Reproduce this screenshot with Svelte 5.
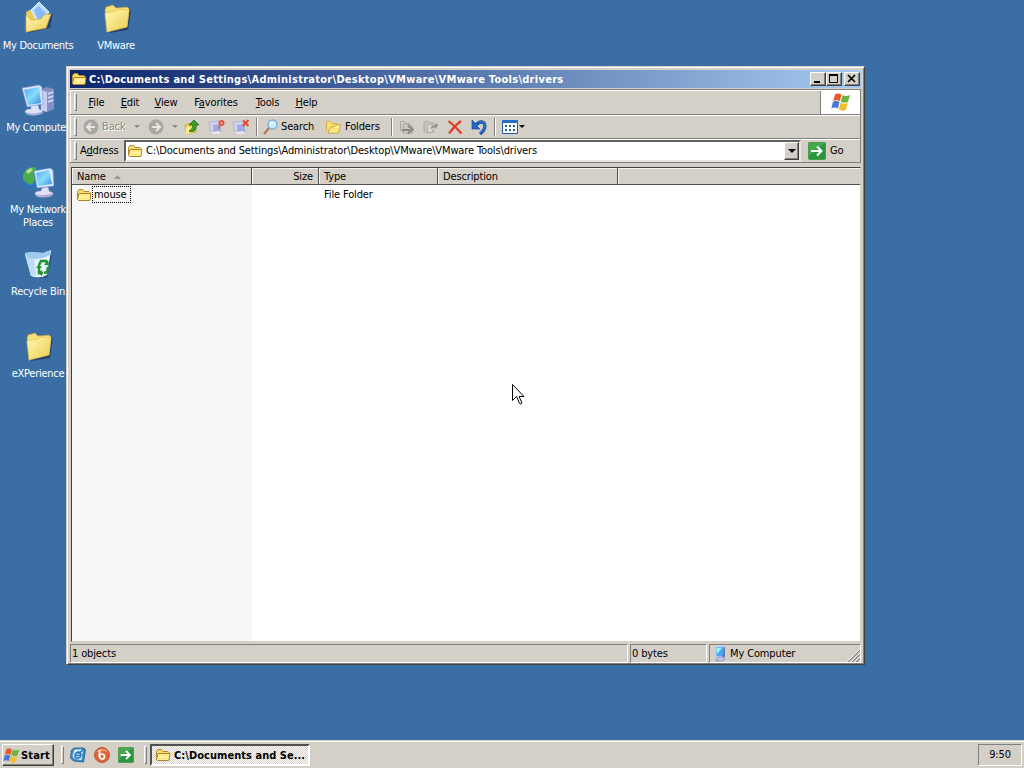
<script>
  const path = 'C:\\Documents and Settings\\Administrator\\Desktop\\VMware\\VMware Tools\\drivers'

  const columns = [
    [
      { icon: 'documents', label: 'My Documents' },
      { icon: 'computer', label: 'My Computer' },
      { icon: 'network', label: 'My Network Places' },
      { icon: 'recycle', label: 'Recycle Bin' },
      { icon: 'folder', label: 'eXPerience' }
    ],
    [{ icon: 'folder', label: 'VMware' }]
  ]

  const menus = [
    { pre: '', key: 'F', post: 'ile', width: 33 },
    { pre: '', key: 'E', post: 'dit', width: 34 },
    { pre: '', key: 'V', post: 'iew', width: 38 },
    { pre: 'F', key: 'a', post: 'vorites', width: 62 },
    { pre: '', key: 'T', post: 'ools', width: 41 },
    { pre: '', key: 'H', post: 'elp', width: 37 }
  ]
</script>

{#snippet smallFolder()}
  <svg width="16" height="16" viewBox="0 0 16 16">
    <path d="M1.500 12.500V4.500l1.500-2h3.500l1.500 2h5l1 1v7z" fill="#f5dc72" stroke="#b48a26"/>
    <path d="M2.500 13.500l-1-1 1.500-6h12l-1.200 7z" fill="#fff2a0" stroke="#b08522"/>
    <path d="M4 8h10M3.500 11.500h10" stroke="#ffe473"/>
  </svg>
{/snippet}

{#snippet flag(size)}
  <svg width={size} height={size} viewBox="0 0 20 20">
    <path d="M4 2.500q3-1.800 6.500 0L8.900 9Q5.500 7.300 2.300 9z" fill="#e9582b"/>
    <path d="M11.500 3q3 2 7.500 0L17 10q-4 1.600-7.300-.5z" fill="#6eb33d"/>
    <path d="M2 10q3-2 6.500 0L6.900 16.500Q3.500 14.700.300 16.500z" fill="#4679d5"/>
    <path d="M9.500 10.500q3.400 2 7.200.6L14.900 18q-4 1.600-7.200-.8z" fill="#f3bd32"/>
  </svg>
{/snippet}

{#snippet goArrow(size)}
  <svg width={size} height={size} viewBox="0 0 18 18">
    <rect x=".5" y=".5" width="17" height="17" rx="1" fill="#2a973c" stroke="#4c9b50"/>
    <path d="M1 1h16L1 14z" fill="#5bb65c" opacity=".55"/>
    <path d="M3 9h10M9 4.500L13.500 9 9 13.500" fill="none" stroke="#fff" stroke-width="2"/>
  </svg>
{/snippet}

{#snippet bigIcon(name)}
  <svg width="32" height="32" viewBox="0 0 32 32">
    <defs>
      <linearGradient id="yellow-{name}" x2="1" y2="1">
        <stop stop-color="#fffab4"/><stop offset="1" stop-color="#edca50"/>
      </linearGradient>
      <linearGradient id="screen-{name}" x2="1" y2="1">
        <stop stop-color="#55a5f2"/><stop offset=".5" stop-color="#86dcff"/><stop offset="1" stop-color="#3989dc"/>
      </linearGradient>
    </defs>
    {#if name === 'folder'}
      <path d="M8 10l23-2-3 20-19 3z" fill="#1d3554" opacity=".75"/>
      <path d="M5 8l1-3 7-2 3 3 11-1 2 2-2 17H7z" fill="#f5df79" stroke="#bd9b3d" stroke-width=".7"/>
      <path d="M5 11l11-2 3-2 10 1-2 17-20 5z" fill="url(#yellow-folder)" stroke="#e5c650" stroke-width=".7"/>
    {:else if name === 'documents'}
      <path d="M6 31L28 26l3-14-3 1z" fill="#1d3554" opacity=".7"/>
      <path d="M4 10l6-3 3 3 12-2-1 17-18 3z" fill="#eacb58"/>
      <path d="M9 8L17 0l10 10-10 13z" fill="#b9dcff" stroke="#e5f3ff"/>
      <path d="M12 8l5-4 7 8-7 8z" fill="#88bafa"/>
      <path d="M4 29V13l5 5 10-1 3-4 7-1-5 14-20 4z" fill="url(#yellow-documents)" stroke="#d5ad3a" stroke-width=".7"/>
    {:else if name === 'recycle'}
      <path d="M8 29l17 1 5-22-3-1z" fill="#1d3554" opacity=".5"/>
      <path d="M3 5l7-1 11 1 8-3-4 25q-7 4-16 1z" fill="#c4e4f7"/>
      <path d="M3 6q13 6 26-3l-5 24q-7 4-15 1z" fill="#e2f3fd"/>
      <path d="M3 5l8-1 10 1 8-3-1 5q-12 6-24 3z" fill="#9dcbef"/>
      <path d="M3 7l9 3 2 18-5 0z" fill="#b0d4f2" opacity=".7"/>
      <path d="M17 17l2-4h5l2 4M17 20v5h4M26 19l-1 5-3 1" fill="none" stroke="#26912f" stroke-width="2.500"/>
      <path d="M22 17h5l-1-5zM20 22v6l-4-3zM14 20l3-4 3 4z" fill="#26912f"/>
    {:else if name === 'computer'}
      <path d="M18 6l7-3 7 2v20l-7 3-6-2z" fill="#8590c6"/>
      <path d="M18 6l7 2v20l-6-2z" fill="#c7cdf0"/>
      <path d="M26 10l5-2M26 14l5-2M26 18l5-2" stroke="#d9def8" stroke-width="1.500"/>
      <path d="M0 4l17-3 3 2 1 17-16 3z" fill="#d8e4fb" stroke="#7293c9" stroke-width=".6"/>
      <path d="M2 6l15-3 2 16-13 2z" fill="url(#screen-computer)"/>
      <path d="M9 22l7-1 1 4 4 2q1 3-7 4-9 1-11-3 0-3 6-3z" fill="#dee3f7" stroke="#a0addd" stroke-width=".6"/>
      <path d="M4 28q8 4 17-1-1 4-8 4-7 1-9-3" fill="#9fa8d2"/>
    {:else}
      <circle cx="11" cy="11" r="10.500" fill="#2b70c8"/>
      <path d="M1 9Q4 0 13 1l3 5-5 2 2 5-3 6Q4 18 1 13z" fill="#4cac4b"/>
      <path d="M4 5l5-3 2 2-5 4z" fill="#b5e397"/>
      <path d="M12 5l16-3 3 2 1 16-17 2z" fill="#dbe9fb" stroke="#688fc8" stroke-width=".6"/>
      <path d="M14 7l13-3 3 14-14 2z" fill="url(#screen-network)"/>
      <path d="M20 22l6-1 1 4 4 2q1 3-7 4-9 1-11-3 0-3 6-3z" fill="#e5dff5" stroke="#a9a5d6" stroke-width=".6"/>
      <path d="M14 28q8 3 17-1-2 4-9 4-6 0-8-3" fill="#a5a8d2"/>
    {/if}
  </svg>
{/snippet}

{#snippet monitor(mark)}
  <svg width="18" height="16" viewBox="0 0 18 16">
    <path d="M1 3l10-1v9L2 12z" fill="#cfd1e8" stroke="#b3b7d9"/>
    <path d="M5 6l8-1v8l-7 1z" fill="#a3abdf"/>
    <path d="M3 13l8-1 2 3H5z" fill="#e6e6f5"/>
    {#if mark === 'map'}
      <circle cx="13.500" cy="4" r="2" fill="#f3c2b5" stroke="#e0563f" stroke-width="2"/>
      <path d="M12 6l-2 4" stroke="#db6851" stroke-width="1.500"/>
    {:else}
      <path d="M11 1.500l5.500 5.500M16.500 1l-5.500 6" stroke="#ea462e" stroke-width="2"/>
    {/if}
  </svg>
{/snippet}

<div class="screen">
  <div class="desktop">
    {#each columns as items}
      <div class="column">
        {#each items as item}
          <div class="shortcut">
            {@render bigIcon(item.icon)}
            <span>{item.label}</span>
          </div>
        {/each}
      </div>
    {/each}
  </div>

  <main class="window">
    <header class="title">
      {@render smallFolder()}
      <span class="title-text">{path}</span>
      <div class="controls">
        <button aria-label="Minimize"><svg width="12" height="10"><path d="M2 8h6" stroke="#000" stroke-width="2"/></svg></button>
        <button aria-label="Maximize"><svg width="12" height="10"><path d="M1.500 1.500h8v7h-8z" fill="none" stroke="#000"/><path d="M1 1h9" stroke="#000" stroke-width="2"/></svg></button>
        <button class="close" aria-label="Close"><svg width="12" height="10"><path d="M2 1l7 7M9 1L2 8" stroke="#000" stroke-width="1.700"/></svg></button>
      </div>
    </header>

    <nav class="menu">
      <i class="grip"></i>
      {#each menus as m}
        <span class="menu-item" style="width: {m.width}px">{m.pre}<u>{m.key}</u>{m.post}</span>
      {/each}
      <div class="throbber">{@render flag(20)}</div>
    </nav>

    <div class="toolbar">
      <i class="grip"></i>
      <div class="tool back">
        <svg width="16" height="16" viewBox="0 0 16 16"><circle cx="8" cy="8" r="7.500" fill="#a8a7a3"/><path d="M12 8H4m4-4L4 8l4 4" fill="none" stroke="#e8e7e2" stroke-width="2"/></svg>
        <span>Back</span>
        <b class="caret"></b>
      </div>
      <div class="tool forward">
        <svg width="16" height="16" viewBox="0 0 16 16"><circle cx="8" cy="8" r="7.500" fill="#a8a7a3"/><path d="M4 8h8M8 4l4 4-4 4" fill="none" stroke="#e8e7e2" stroke-width="2"/></svg>
        <b class="caret"></b>
      </div>
      <div class="tool up">
        <svg width="16" height="16" viewBox="0 0 16 16">
          <path d="M1 6l4-2 2 2 5-1v8l-9 2z" fill="#edcd54" stroke="#c39b2c" stroke-width=".7"/>
          <path d="M2 8l8-1-1 7-7 1z" fill="#ffed82"/>
          <path d="M7 13q6-1 5-7h3L10 1 5 6h4q0 4-4 6z" fill="#36a429" stroke="#1b6a17" stroke-width=".8"/>
        </svg>
      </div>
      <div class="tool map">{@render monitor('map')}</div>
      <div class="tool unmap">{@render monitor('cross')}</div>
      <i class="divider"></i>
      <div class="tool search">
        <svg width="17" height="16" viewBox="0 0 17 16"><path d="M7 9l-5 6" stroke="#bd7158" stroke-width="2.200"/><circle cx="10.500" cy="5.500" r="4.500" fill="#c6efff" stroke="#7faed9" stroke-width="1.400"/><path d="M8 5q1-2 3-2" fill="none" stroke="#fff"/></svg>
        <span>Search</span>
      </div>
      <div class="tool folders">
        <svg width="17" height="16" viewBox="0 0 17 16"><path d="M1.500 12V2.500h4L7 4.500h5v3" fill="#f6df75" stroke="#d5b145"/><path d="M3 14L5.500 8H9l1-2h5.500l-2 8z" fill="#fff193" stroke="#cfa83c"/><path d="M6 9.500h8M5.500 11.500H13" stroke="#f8dd65"/></svg>
        <span>Folders</span>
      </div>
      <i class="divider"></i>
      <div class="tool move">
        <svg width="17" height="16" viewBox="0 0 17 16"><path d="M1.500 12V2.500h4l1 2H11v8z" fill="#d2d1cc" stroke="#aaa9a4"/><path d="M4 14V5h7l3 3v6z" fill="#c9c8c4" stroke="#aaa9a4"/><path d="M3 11h8M9 6.500l4.500 4-4.500 4" fill="none" stroke="#868580" stroke-width="2"/></svg>
      </div>
      <div class="tool copy">
        <svg width="17" height="16" viewBox="0 0 17 16"><path d="M1 3l4-1 2 2 4 0 0 9-7 1-3-2z" fill="#c5c4c0" stroke="#aaa9a4"/><path d="M4 6l6-1v8l-5 1z" fill="#dad9d4" stroke="#a3a29d" stroke-width=".7"/><path d="M7 9q1-4 5-4V3l4 3-4 6v-3q-3 0-5 2z" fill="#9c9b96" stroke="#eceae4" stroke-width=".6"/></svg>
      </div>
      <div class="tool delete">
        <svg width="16" height="16" viewBox="0 0 16 16"><path d="M1.500 2Q8 7 14.500 14.500M14 2Q7 7 2 14.500" fill="none" stroke="#e43c1e" stroke-width="2.200"/></svg>
      </div>
      <div class="tool undo">
        <svg width="16" height="16" viewBox="0 0 16 16"><path d="M4 7Q9 1 13 4q3 5-4 11" fill="none" stroke="#194f9f" stroke-width="3.200"/><path d="M4 7Q9 1 13 4q3 5-4 10" fill="none" stroke="#3073cc" stroke-width="1.600"/><path d="M1 1v9h8L6 7l3-3-4 1z" fill="#246bc4" stroke="#174c9b" stroke-width=".7"/></svg>
      </div>
      <i class="divider"></i>
      <div class="tool views">
        <svg width="16" height="14" viewBox="0 0 16 14"><path d="M.5.500h15v13H.5z" fill="#f5fbff" stroke="#205bb5"/><path d="M0 1.500h16" stroke="#286ccc" stroke-width="3"/><path d="M3 6h2M7 6h2M11 6h2M3 10h2M7 10h2M11 10h2" stroke="#315f91" stroke-width="2"/></svg>
        <b class="caret dark"></b>
      </div>
    </div>

    <div class="address">
      <i class="grip"></i>
      <span class="address-label">A<u>d</u>dress</span>
      <div class="combo">
        {@render smallFolder()}
        <span class="address-text">{path}</span>
        <button class="drop" aria-label="Open list"><b class="caret dark wide"></b></button>
      </div>
      <div class="go">{@render goArrow(18)}<span>Go</span></div>
    </div>

    <section class="list">
      <div class="list-head">
        <span class="name">Name <svg width="7" height="4"><path d="M0 4L3.500 0 7 4z" fill="#9b9892"/></svg></span>
        <span class="size">Size</span>
        <span class="type">Type</span>
        <span class="description">Description</span>
        <span class="rest"></span>
      </div>
      <div class="rows">
        <div class="sorted">
          <div class="file">{@render smallFolder()}<span>mouse</span></div>
        </div>
        <div class="kind">File Folder</div>
      </div>
    </section>

    <footer class="status">
      <span class="objects">1 objects</span>
      <span class="bytes">0 bytes</span>
      <span class="zone">
        <svg width="16" height="16" viewBox="0 0 16 16"><path d="M3 1l9-1 1 10-9 1z" fill="#4caaf0" stroke="#bcdcf8"/><path d="M4 2l6-.5-5 7z" fill="#a2edff"/><path d="M12 1l1 0v10l-3 1" fill="#6677b9"/><path d="M6 11h5l2 2q-2 3-9 2 0-2 2-4z" fill="#c1c0e8" stroke="#8586bf" stroke-width=".7"/></svg>
        My Computer
        <svg class="resize" width="13" height="13"><path d="M1 13L13 1M5 13l8-8M9 13l4-4" stroke="#85827d" stroke-width="1.500"/><path d="M0 13L13 0M4 13l9-9M8 13l5-5" stroke="#fff" stroke-width=".8"/></svg>
      </span>
    </footer>
  </main>

  <svg class="cursor" width="13" height="21" viewBox="0 0 13 21"><path d="M.5.500v16l4-4 3 7q1.500 1.200 2.500-.5l-3-6.500h5z" fill="#fff" stroke="#000"/></svg>

  <footer class="taskbar">
    <button class="start">{@render flag(17)}<span>Start</span></button>
    <i class="grip"></i>
    <div class="quick">
      <svg width="16" height="16" viewBox="0 0 16 16"><path d="M4 1h10l1.500 2-2 12-10-1-3-3 1-8z" fill="#3d8fc9" stroke="#1d5a87" stroke-width=".8"/><path d="M4.500 2.500h8.500L11.500 13l-7-1-2-3z" fill="#d9f2ff"/><path d="M5 8.500h6q0-3.500-3-3.500-3 1-3 4t3 2l3-1M8 7l6-5" fill="none" stroke="#2c79b7" stroke-width="1.600"/></svg>
      <svg width="16" height="16" viewBox="0 0 16 16"><circle cx="8" cy="8" r="7.500" fill="#dc653a" stroke="#bd5832"/><path d="M2 5q6-6 12 0-6-2-12 0" fill="#f2a27c"/><path d="M5.500 3v6.500" fill="none" stroke="#fff" stroke-width="1.800"/><circle cx="8" cy="9.500" r="2.500" fill="none" stroke="#fff" stroke-width="1.700"/></svg>
      {@render goArrow(16)}
    </div>
    <i class="grip"></i>
    <div class="task">{@render smallFolder()}<span>C:\Documents and Se...</span></div>
    <div class="clock">9:50</div>
  </footer>
</div>

<style>
  :global(body) { margin: 0; overflow: hidden; }

  .screen {
    position: relative;
    width: 1024px;
    height: 768px;
    display: flex;
    flex-direction: column;
    overflow: hidden;
    background: #3a6ea5;
    font: 11px/13px Tahoma, "DejaVu Sans Condensed", "DejaVu Sans", sans-serif;
    font-stretch: condensed;
    letter-spacing: -0.13px;
    color: #000;
    white-space: nowrap;
    cursor: default;
  }

  .screen * { box-sizing: border-box; }
  svg { display: block; flex: none; }
  button { font: inherit; letter-spacing: inherit; color: inherit; margin: 0; padding: 0; border-radius: 0; }
  u { text-underline-offset: 1px; text-decoration-thickness: 1px; }

  .desktop { flex: 1; display: flex; gap: 2px; padding-top: 2px; }
  .column { width: 76px; }
  .shortcut {
    height: 82px;
    display: flex;
    flex-direction: column;
    align-items: center;
    gap: 5px;
    color: #fff;
    text-align: center;
    white-space: normal;
    letter-spacing: -0.28px;
  }

  .window {
    position: absolute;
    left: 66px;
    top: 66px;
    width: 799px;
    height: 599px;
    display: flex;
    flex-direction: column;
    padding: 2px 3px 1px;
    background: #d4d0c8;
    border: 1px solid #d4d0c8;
    border-right-color: #404040;
    border-bottom-color: #404040;
    box-shadow: inset 1px 1px #fff, inset -1px -1px #808080;
  }

  .title {
    height: 18px;
    margin-top: 1px;
    display: flex;
    align-items: center;
    padding: 0 1px;
    background: linear-gradient(90deg, #0a246a, #a6caf0);
    color: #fff;
    font-weight: bold;
  }
  .title-text { flex: 1; margin-left: 2px; letter-spacing: 0.27px; }
  .controls { display: flex; }
  .controls button, .drop {
    width: 16px;
    height: 14px;
    display: flex;
    justify-content: center;
    align-items: center;
    background: #d4d0c8;
    border: 1px solid;
    border-color: #fff #404040 #404040 #fff;
    box-shadow: inset -1px -1px #808080;
  }
  .controls .close { margin-left: 2px; }

  .menu, .toolbar, .address {
    display: flex;
    align-items: center;
    border: solid #808080;
    border-width: 1px 1px 0 0;
    box-shadow: inset 1px 1px #fff;
  }
  .menu { height: 25px; margin-top: 1px; }
  .toolbar { height: 24px; }
  .address { height: 25px; border-bottom-width: 1px; }
  .grip {
    width: 3px;
    height: 18px;
    margin-left: 4px;
    border: 1px solid;
    border-color: #fff #808080 #808080 #fff;
  }
  .menu .grip { margin-right: 3px; }
  .menu-item { text-align: center; }
  .throbber {
    width: 40px;
    height: 23px;
    margin-left: auto;
    display: flex;
    align-items: center;
    justify-content: center;
    background: #fff;
    border-left: 1px solid #808080;
  }

  .tool { display: flex; align-items: center; flex: none; }
  .back { width: 65px; margin-left: 6px; color: #8b8882; text-shadow: 1px 1px #fff; }
  .back span { width: 33px; margin-left: 3px; }
  .forward { width: 36px; gap: 8px; }
  .caret {
    width: 0;
    height: 0;
    border: 3px solid transparent;
    border-top-color: #8b8882;
    border-bottom: 0;
  }
  .back .caret { margin-left: -1px; }
  .caret.dark { border-top-color: #000; }
  .caret.wide { border-width: 4px 4px 0; }
  .up { width: 24px; }
  .map, .unmap { width: 24px; }
  .divider { width: 2px; height: 18px; background: #808080; border-right: 1px solid #fff; }
  .search { width: 63px; gap: 2px; margin-left: 4px; }
  .folders { width: 66px; gap: 3px; }
  .divider + .move { margin-left: 6px; }
  .move { width: 24px; }
  .copy { width: 24px; }
  .delete { width: 24px; }
  .undo { width: 23px; }
  .views { gap: 1px; margin-left: 6px; }

  .address-label { width: 44px; margin-left: 3px; }
  .combo {
    width: 677px;
    height: 22px;
    display: flex;
    align-items: center;
    padding-left: 1px;
    background: #fff;
    border: 2px solid;
    border-color: #606060 #e9e7e2 #e9e7e2 #606060;
  }
  .address-text { flex: 1; margin-left: 3px; }
  .drop { width: 15px; height: 18px; }
  .go { display: flex; align-items: center; gap: 4px; margin-left: 7px; }

  .list {
    flex: 1;
    min-height: 0;
    display: flex;
    flex-direction: column;
    margin: 4px 0 0 1px;
    border: 1px solid;
    border-color: #404040 #d4d0c8 #d4d0c8 #404040;
    background: #fff;
  }
  .list-head { display: flex; height: 17px; background: #d4d0c8; border-bottom: 1px solid #505050; }
  .list-head span {
    padding: 2px 5px 0;
    border-right: 1px solid #505050;
    box-shadow: inset 1px 1px #f5f4f1;
  }
  .list-head .name { width: 180px; display: flex; gap: 8px; }
  .name svg { margin-top: 5px; }
  .size { width: 67px; text-align: right; }
  .type { width: 119px; }
  .description { width: 180px; }
  .list-head .rest { flex: 1; border-right: 0; }
  .rows { flex: 1; display: flex; }
  .sorted { width: 180px; background: #f6f6f6; padding: 1px 0 0 4px; }
  .file { display: flex; align-items: center; }
  .file span { width: 39px; height: 17px; padding: 1px; border: 1px dotted #000; }
  .kind { padding: 3px 0 0 72px; }

  .status { height: 19px; margin-top: 2px; display: flex; gap: 2px; }
  .status > span {
    display: flex;
    align-items: center;
    padding-left: 1px;
    border: 1px solid;
    border-color: #808080 #fff #fff #808080;
  }
  .objects { width: 558px; }
  .bytes { width: 77px; }
  .zone { flex: 1; gap: 2px; }
  .status .zone { padding-left: 2px; }
  .resize { margin: 4px 0 0 auto; }

  .cursor { position: absolute; left: 512px; top: 384px; }

  .taskbar {
    height: 28px;
    display: flex;
    align-items: center;
    padding: 2px 2px 0;
    background: #d4d0c8;
    box-shadow: inset 0 1px #d4d0c8, inset 0 2px #fff;
  }
  .start {
    width: 52px;
    height: 22px;
    display: flex;
    align-items: center;
    gap: 1px;
    background: #d4d0c8;
    border: 1px solid;
    border-color: #fff #404040 #404040 #fff;
    box-shadow: inset -1px -1px #808080;
    font-weight: bold;
  }
  .start span { letter-spacing: 0.15px; }
  .taskbar .grip { margin-left: 7px; }
  .quick { display: flex; gap: 8px; margin: 0 3px 0 6px; }
  .task {
    width: 160px;
    height: 22px;
    display: flex;
    align-items: center;
    gap: 3px;
    margin-left: 3px;
    padding-left: 3px;
    border: 2px solid;
    border-color: #505050 #fff #fff #505050;
    background: repeating-conic-gradient(#fff 0 25%, #d4d0c8 0 50%) 0 0 / 2px 2px;
    font-weight: bold;
    letter-spacing: 0.04px;
  }
  .clock {
    width: 44px;
    height: 22px;
    margin-left: auto;
    border: 1px solid;
    border-color: #808080 #fff #fff #808080;
    text-align: center;
    line-height: 20px;
  }
</style>
